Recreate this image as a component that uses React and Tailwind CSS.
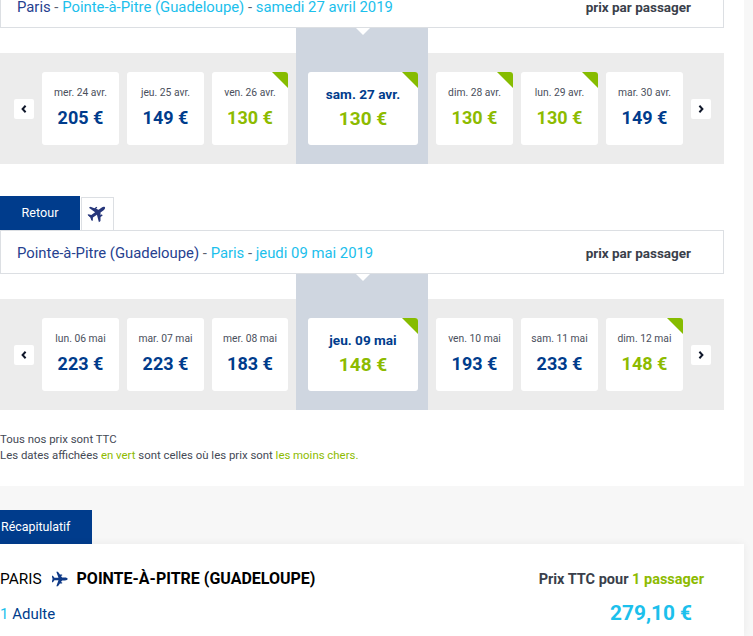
const NAVY = "text-[#003c8c]";

const outbound = {
  left: [
    { label: "mer. 24 avr.", price: "205 €" },
    { label: "jeu. 25 avr.", price: "149 €" },
    { label: "ven. 26 avr.", price: "130 €", low: true, w: true },
  ],
  selected: { label: "sam. 27 avr.", price: "130 €", low: true },
  right: [
    { label: "dim. 28 avr.", price: "130 €", low: true },
    { label: "lun. 29 avr.", price: "130 €", low: true },
    { label: "mar. 30 avr.", price: "149 €" },
  ],
};

const inbound = {
  left: [
    { label: "lun. 06 mai", price: "223 €" },
    { label: "mar. 07 mai", price: "223 €" },
    { label: "mer. 08 mai", price: "183 €", w: true },
  ],
  selected: { label: "jeu. 09 mai", price: "148 €", low: true },
  right: [
    { label: "ven. 10 mai", price: "193 €" },
    { label: "sam. 11 mai", price: "233 €" },
    { label: "dim. 12 mai", price: "148 €", low: true },
  ],
};

const Corner = () => (
  <span className="absolute right-0 top-0 h-0 w-0 border-l-[16px] border-t-[16px] border-l-transparent border-t-[#86bc00]" />
);

const DayCard = ({ day }) => (
  <div
    className={`relative flex h-[73px] flex-col items-center overflow-hidden rounded-[3px] bg-white pt-[14px] ${
      day.w ? "w-[76px]" : "w-[77px]"
    }`}
  >
    {day.low && <Corner />}
    <p className="text-[10.3px] leading-[14px] text-[#4a4f5c]">{day.label}</p>
    <p
      className={`mt-[6px] text-[18px] font-bold leading-6 ${
        day.low ? "text-[#8dbb00]" : NAVY
      }`}
    >
      {day.price}
    </p>
  </div>
);

const SelectedCard = ({ day }) => (
  <div className="relative flex h-[73px] w-[110px] flex-col items-center overflow-hidden rounded-[3px] bg-white pt-[14px]">
    {day.low && <Corner />}
    <p className={`text-[13.6px] font-bold leading-4 ${NAVY}`}>{day.label}</p>
    <p className="mt-[5px] text-[19px] font-bold leading-6 text-[#8dbb00]">{day.price}</p>
  </div>
);

const Arrow = ({ flip }) => (
  <button className="flex h-5 w-5 items-center justify-center rounded-[2px] bg-white">
    <svg width="6" height="8" viewBox="0 0 6 8" className={flip ? "rotate-180" : ""}>
      <path d="M4.6 0.8 1.6 4l3 3.2" fill="none" stroke="#10182b" strokeWidth="2" />
    </svg>
  </button>
);

const DayPicker = ({ days }) => (
  <div className="flex w-[724px] items-end">
    <div className="flex h-[111px] w-[296px] items-center gap-2 bg-[#ececec] pl-[14px]">
      <Arrow />
      {days.left.map((d) => (
        <DayCard key={d.label} day={d} />
      ))}
    </div>
    <div className="relative h-[136px] w-[132px] bg-[#cfd6e0] pl-3 pt-[44px]">
      <span className="absolute left-[60px] top-0 h-0 w-0 border-x-[7px] border-t-[7px] border-x-transparent border-t-white" />
      <SelectedCard day={days.selected} />
    </div>
    <div className="flex h-[111px] w-[296px] items-center gap-2 bg-[#ececec] pl-2">
      {days.right.map((d) => (
        <DayCard key={d.label} day={d} />
      ))}
      <Arrow flip />
    </div>
  </div>
);

const RouteBar = ({ children, className = "" }) => (
  <div
    className={`flex h-[44px] w-[724px] items-center justify-between border border-[#dcdfe3] bg-white pl-4 pr-8 pt-[3px] ${className}`}
  >
    <p className="text-[14.85px] text-[#1cc0ec]">{children}</p>
    <p className="text-[13.5px] font-bold text-[#3a3f4b]">prix par passager</p>
  </div>
);

// nose up, the callers rotate it to the heading they need
const Plane = ({ className }) => (
  <svg viewBox="0 0 24 24" className={className} fill="currentColor">
    <path d="M12 0.500c1.300 0 2.100 2 2.100 4v4.300l2.900 2v-2h1.800v3.300l4.200 3v2.400l-9-3.200-.2 6 3 2.300v1.900l-4.800-1.400-4.800 1.400v-1.900l3-2.300-.2-6-9 3.200v-2.400l4.200-3v-3.300h1.800v2l2.900-2v-4.300c0-2 .8-4 2.100-4z" />
  </svg>
);

export default function App() {
  return (
    <div className="h-[636px] w-[753px] overflow-hidden bg-[#f7f7f7] font-['Roboto',sans-serif]">
      <div className="w-[744px] bg-white">
        <RouteBar className="mt-[-16px]">
          <span className="text-[#26418f]">Paris</span>
          <span className="text-[#5a6070]"> - </span>
          Pointe-à-Pitre (Guadeloupe)
          <span className="text-[#5a6070]"> - </span>
          samedi 27 avril 2019
        </RouteBar>
        <DayPicker days={outbound} />

        <div className="flex items-end gap-px pt-8">
          <div className="flex h-[34px] w-20 items-center justify-center bg-[#003c8c] pt-px text-[12.6px] text-white">
            Retour
          </div>
          <div className="flex h-[33px] w-[33px] items-center justify-center border-x border-t border-[#dcdfe3] pb-[3px] text-[#26367a]">
            <Plane className="h-[19px] w-[19px] rotate-[55deg]" />
          </div>
        </div>
        <RouteBar>
          <span className="text-[#26418f]">Pointe-à-Pitre (Guadeloupe)</span>
          <span className="text-[#5a6070]"> - </span>
          Paris
          <span className="text-[#5a6070]"> - </span>
          jeudi 09 mai 2019
        </RouteBar>
        <DayPicker days={inbound} />

        <div className="h-[76px] pt-[21px] text-[11.4px] leading-[16px] text-[#444955]">
          <p>Tous nos prix sont TTC</p>
          <p>
            Les dates affichées <span className="text-[#8dbb00]">en vert</span> sont celles où les
            prix sont <span className="text-[#8dbb00]">les moins chers.</span>
          </p>
        </div>
      </div>

      <div className="w-[744px] pt-6">
        <div className="flex h-[34px] w-[92px] items-center bg-[#003c8c] pl-px pt-px text-[12.4px] text-white">
          Récapitulatif
        </div>
        <div className="flex h-[92px] justify-between bg-white pr-10 shadow-[0_0_8px_rgba(0,0,0,0.06)]">
          <div>
            <div className="mt-[25px] flex items-center text-[16px] leading-5 text-black">
              <span className="text-[15.4px]">PARIS</span>
              <Plane className="ml-[10px] mr-[9px] h-4 w-4 rotate-90 text-[#0f3a87]" />
              <span className="font-bold">POINTE-À-PITRE (GUADELOUPE)</span>
            </div>
            <p className={`mt-[15px] text-[15px] leading-5 ${NAVY}`}>
              <span className="text-[#1cc0ec]">1</span> Adulte
            </p>
          </div>
          <div className="flex flex-col items-end pt-[26px]">
            <p className="text-[14.5px] font-bold leading-5 text-[#3a3f4b]">
              Prix TTC pour <span className="text-[#8dbb00]">1 passager</span>
            </p>
            <p className="mr-3 mt-[11px] text-[20.8px] font-bold leading-6 text-[#1cc0ec]">279,10 €</p>
          </div>
        </div>
      </div>
    </div>
  );
}
